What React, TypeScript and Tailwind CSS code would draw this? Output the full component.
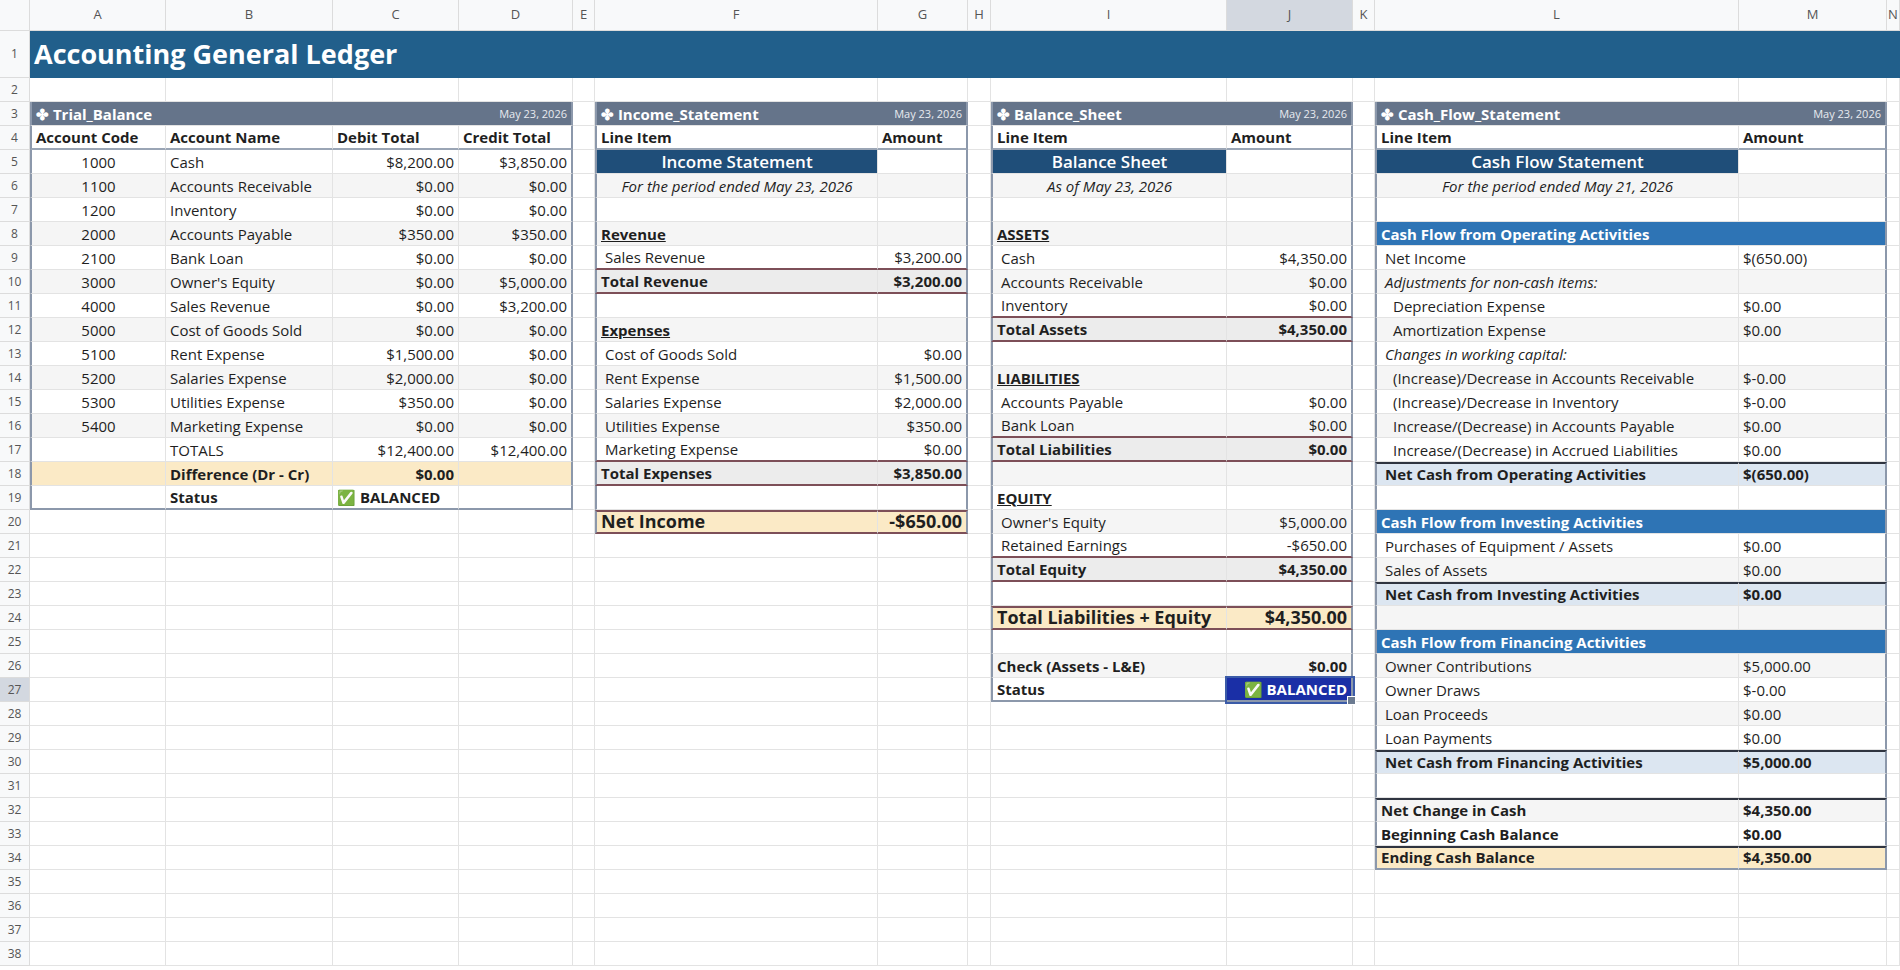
import React from "react";

type Cell = { t?: React.ReactNode; c?: string; span?: number; b?: string; bg?: string };

const COLS = "ABCDEFGHIJKLMN".split("");
const cells: Record<string, Cell> = {};
const put = (r: number, col: string, cell: Cell) => {
  cells[`${r}-${col}`] = cell;
};

const BROWN = "border-b-2 border-b-[#7d4f58]";

// tables: [firstCol, lastCol, startRow, endRow]
const tables: [string, string, number, number][] = [
  ["A", "D", 3, 19],
  ["F", "G", 3, 20],
  ["I", "J", 3, 27],
  ["L", "M", 3, 34],
];

const headerBar = (r: number, col: string, span: number, name: string) =>
  put(r, col, {
    span,
    bg: "bg-[#65748a]",
    c: "self-stretch",
    t: (
      <div className="flex w-full items-center justify-between text-white">
        <span className="font-bold text-[15px]">✤ {name}</span>
        <span className="text-[11px] text-[#e8ebf0]">May 23, 2026</span>
      </div>
    ),
  });

const colHead = (r: number, cols: string[], labels: string[]) =>
  cols.forEach((c, i) => put(r, c, { t: labels[i], c: "font-bold", b: "border-b-2 border-b-[#9aa5b5]", bg: "bg-white" }));

// Trial balance
headerBar(3, "A", 4, "Trial_Balance");
colHead(4, ["A", "B", "C", "D"], ["Account Code", "Account Name", "Debit Total", "Credit Total"]);
const tb: [string, string, string, string][] = [
  ["1000", "Cash", "$8,200.00", "$3,850.00"],
  ["1100", "Accounts Receivable", "$0.00", "$0.00"],
  ["1200", "Inventory", "$0.00", "$0.00"],
  ["2000", "Accounts Payable", "$350.00", "$350.00"],
  ["2100", "Bank Loan", "$0.00", "$0.00"],
  ["3000", "Owner's Equity", "$0.00", "$5,000.00"],
  ["4000", "Sales Revenue", "$0.00", "$3,200.00"],
  ["5000", "Cost of Goods Sold", "$0.00", "$0.00"],
  ["5100", "Rent Expense", "$1,500.00", "$0.00"],
  ["5200", "Salaries Expense", "$2,000.00", "$0.00"],
  ["5300", "Utilities Expense", "$350.00", "$0.00"],
  ["5400", "Marketing Expense", "$0.00", "$0.00"],
];
tb.forEach((row, i) => {
  const r = 5 + i;
  put(r, "A", { t: row[0], c: "justify-center" });
  put(r, "B", { t: row[1] });
  put(r, "C", { t: row[2], c: "justify-end" });
  put(r, "D", { t: row[3], c: "justify-end" });
});
put(17, "B", { t: "TOTALS" });
put(17, "C", { t: "$12,400.00", c: "justify-end" });
put(17, "D", { t: "$12,400.00", c: "justify-end" });
["A", "B", "C", "D"].forEach((c) => put(18, c, { bg: "bg-[#fbeac6]" }));
put(18, "B", { t: "Difference (Dr - Cr)", c: "font-bold", bg: "bg-[#fbeac6]" });
put(18, "C", { t: "$0.00", c: "font-bold justify-end", bg: "bg-[#fbeac6]" });
put(19, "B", { t: "Status", c: "font-bold" });
put(19, "C", { t: "✅ BALANCED", c: "font-bold" });

// statement helpers
const title = (col: string, text: string) =>
  put(5, col, { t: text, c: "justify-center font-semibold text-white text-[17px]", bg: "bg-[#1f4e79]" });
const sub = (col: string, text: string) => put(6, col, { t: text, c: "justify-center italic" });
const sec = (r: number, col: string, text: string) => put(r, col, { t: <span className="underline">{text}</span>, c: "font-bold" });
const item = (r: number, c1: string, c2: string, label: string, amt: string, b?: string) => {
  put(r, c1, { t: label, c: "pl-2", b });
  put(r, c2, { t: amt, c: "justify-end", b });
};
const total = (r: number, c1: string, c2: string, label: string, amt: string) => {
  put(r, c1, { t: label, c: "font-bold", bg: "bg-[#ececec]", b: BROWN });
  put(r, c2, { t: amt, c: "font-bold justify-end", bg: "bg-[#ececec]", b: BROWN });
};
const grand = (r: number, c1: string, c2: string, label: string, amt: string) => {
  put(r, c1, { t: label, c: "font-bold text-[18px] border-t-2 border-t-[#7d4f58]", bg: "bg-[#fbeac6]", b: BROWN });
  put(r, c2, { t: amt, c: "font-bold text-[18px] justify-end border-t-2 border-t-[#7d4f58]", bg: "bg-[#fbeac6]", b: BROWN });
};

// Income statement
headerBar(3, "F", 2, "Income_Statement");
colHead(4, ["F", "G"], ["Line Item", "Amount"]);
title("F", "Income Statement");
sub("F", "For the period ended May 23, 2026");
sec(8, "F", "Revenue");
item(9, "F", "G", "Sales Revenue", "$3,200.00", BROWN);
total(10, "F", "G", "Total Revenue", "$3,200.00");
sec(12, "F", "Expenses");
item(13, "F", "G", "Cost of Goods Sold", "$0.00");
item(14, "F", "G", "Rent Expense", "$1,500.00");
item(15, "F", "G", "Salaries Expense", "$2,000.00");
item(16, "F", "G", "Utilities Expense", "$350.00");
item(17, "F", "G", "Marketing Expense", "$0.00", BROWN);
total(18, "F", "G", "Total Expenses", "$3,850.00");
grand(20, "F", "G", "Net Income", "-$650.00");

// Balance sheet
headerBar(3, "I", 2, "Balance_Sheet");
colHead(4, ["I", "J"], ["Line Item", "Amount"]);
title("I", "Balance Sheet");
sub("I", "As of May 23, 2026");
sec(8, "I", "ASSETS");
item(9, "I", "J", "Cash", "$4,350.00");
item(10, "I", "J", "Accounts Receivable", "$0.00");
item(11, "I", "J", "Inventory", "$0.00", BROWN);
total(12, "I", "J", "Total Assets", "$4,350.00");
sec(14, "I", "LIABILITIES");
item(15, "I", "J", "Accounts Payable", "$0.00");
item(16, "I", "J", "Bank Loan", "$0.00", BROWN);
total(17, "I", "J", "Total Liabilities", "$0.00");
sec(19, "I", "EQUITY");
item(20, "I", "J", "Owner's Equity", "$5,000.00");
item(21, "I", "J", "Retained Earnings", "-$650.00", BROWN);
total(22, "I", "J", "Total Equity", "$4,350.00");
grand(24, "I", "J", "Total Liabilities + Equity", "$4,350.00");
put(26, "I", { t: "Check (Assets - L&E)", c: "font-bold" });
put(26, "J", { t: "$0.00", c: "font-bold justify-end" });
put(27, "I", { t: "Status", c: "font-bold" });
put(27, "J", {
  t: (
    <>
      <span className="font-bold text-white">✅ BALANCED</span>
      <span className="absolute -bottom-[5px] -right-[5px] h-[9px] w-[9px] bg-[#6b7a90] border border-white" />
    </>
  ),
  c: "justify-end relative !overflow-visible outline-2 outline-[#3b5ba8]",
  bg: "bg-[#1a2fa6]",
});

// Cash flow
headerBar(3, "L", 2, "Cash_Flow_Statement");
colHead(4, ["L", "M"], ["Line Item", "Amount"]);
title("L", "Cash Flow Statement");
sub("L", "For the period ended May 21, 2026");
const cfHead = (r: number, text: string) =>
  put(r, "L", { span: 2, t: text, c: "font-bold text-white", bg: "bg-[#2e74b5]" });
const cf = (r: number, label: string, amt: string, cls = "pl-2") => {
  put(r, "L", { t: label, c: cls });
  put(r, "M", { t: amt });
};
const cfNet = (r: number, label: string, amt: string) => {
  put(r, "L", { t: label, c: "pl-2 font-bold border-t-2 border-t-[#2f3440]", bg: "bg-[#dce6f1]" });
  put(r, "M", { t: amt, c: "font-bold border-t-2 border-t-[#2f3440]", bg: "bg-[#dce6f1]" });
};
cfHead(8, "Cash Flow from Operating Activities");
cf(9, "Net Income", "$(650.00)");
cf(10, "Adjustments for non-cash items:", "", "pl-2 italic");
cf(11, "Depreciation Expense", "$0.00", "pl-4");
cf(12, "Amortization Expense", "$0.00", "pl-4");
cf(13, "Changes in working capital:", "", "pl-2 italic");
cf(14, "(Increase)/Decrease in Accounts Receivable", "$-0.00", "pl-4");
cf(15, "(Increase)/Decrease in Inventory", "$-0.00", "pl-4");
cf(16, "Increase/(Decrease) in Accounts Payable", "$0.00", "pl-4");
cf(17, "Increase/(Decrease) in Accrued Liabilities", "$0.00", "pl-4");
cfNet(18, "Net Cash from Operating Activities", "$(650.00)");
cfHead(20, "Cash Flow from Investing Activities");
cf(21, "Purchases of Equipment / Assets", "$0.00");
cf(22, "Sales of Assets", "$0.00");
cfNet(23, "Net Cash from Investing Activities", "$0.00");
cfHead(25, "Cash Flow from Financing Activities");
cf(26, "Owner Contributions", "$5,000.00");
cf(27, "Owner Draws", "$-0.00");
cf(28, "Loan Proceeds", "$0.00");
cf(29, "Loan Payments", "$0.00");
cfNet(30, "Net Cash from Financing Activities", "$5,000.00");
put(32, "L", { t: "Net Change in Cash", c: "font-bold border-t-2 border-t-[#2f3440]" });
put(32, "M", { t: "$4,350.00", c: "font-bold border-t-2 border-t-[#2f3440]" });
put(33, "L", { t: "Beginning Cash Balance", c: "font-bold" });
put(33, "M", { t: "$0.00", c: "font-bold" });
put(34, "L", { t: "Ending Cash Balance", c: "font-bold border-t-2 border-t-[#2f3440]", bg: "bg-[#fbeac6]" });
put(34, "M", { t: "$4,350.00", c: "font-bold border-t-2 border-t-[#2f3440]", bg: "bg-[#fbeac6]" });

const inTable = (r: number, ci: number) =>
  tables.find(([f, l, s, e]) => r >= s && r <= e && ci >= COLS.indexOf(f) && ci <= COLS.indexOf(l));

function renderRow(r: number) {
  const out: React.ReactNode[] = [];
  out.push(
    <div
      key={`h${r}`}
      className={`flex items-center justify-center border-r border-b border-[#dcdcdc] text-[12px] text-[#555] ${
        r === 27 ? "bg-[#d3d8e0]" : "bg-[#f8f9fa]"
      }`}
    >
      {r}
    </div>
  );
  if (r === 1) {
    out.push(
      <div key="title" className="col-span-14 flex items-center bg-[#215f8b] px-1 text-[27px] font-bold text-white">
        Accounting General Ledger
      </div>
    );
    return out;
  }
  let ci = 0;
  while (ci < COLS.length) {
    const col = COLS[ci];
    const cell = cells[`${r}-${col}`] || {};
    const span = cell.span || 1;
    const last = ci + span - 1;
    const t = inTable(r, ci);
    let right = "border-r border-r-[#e3e3e3]";
    let left = "";
    let bottom = cell.b || "border-b border-b-[#e3e3e3]";
    let bg = cell.bg || "bg-white";
    if (t) {
      const [f, l, , e] = t;
      if (ci === COLS.indexOf(f)) left = "border-l-2 border-l-[#8c98ab]";
      if (last === COLS.indexOf(l)) right = "border-r-2 border-r-[#8c98ab]";
      if (r === e && !cell.b) bottom = "border-b-2 border-b-[#8c98ab]";
      if (!cell.bg && r >= 5 && r % 2 === 0) bg = "bg-[#f5f5f5]";
    }
    const align = r === 3 ? "items-center" : "items-end pb-[1px]";
    out.push(
      <div
        key={`${r}-${col}`}
        className={`flex min-w-0 ${align} overflow-hidden whitespace-nowrap px-1 leading-[20px] ${left} ${right} ${bottom} ${bg} ${
          cell.c || ""
        }`}
        style={span > 1 ? { gridColumn: `span ${span}` } : undefined}
      >
        {cell.t}
      </div>
    );
    ci += span;
  }
  return out;
}

export default function App() {
  const rows = Array.from({ length: 38 }, (_, i) => i + 1);
  return (
    <div
      className="h-[970px] w-[1900px] overflow-hidden bg-white text-[15px] text-[#1f1f1f]"
      style={{ fontFamily: '"Open Sans", "Noto Sans", sans-serif' }}
    >
      <div className="grid grid-cols-[30px_136px_167px_126px_114px_22px_283px_90px_23px_236px_126px_22px_364px_148px_13px] grid-rows-[31px_47px_24px_repeat(36,24px)]">
        <div className="border-r border-b border-[#dcdcdc] bg-[#f8f9fa]" />
        {COLS.map((c) => (
          <div
            key={c}
            className={`flex items-center justify-center border-r border-b border-[#dcdcdc] text-[13px] text-[#555] ${
              c === "J" ? "bg-[#d3d8e0]" : "bg-[#f8f9fa]"
            }`}
          >
            {c}
          </div>
        ))}
        {rows.map((r) => renderRow(r))}
      </div>
    </div>
  );
}
